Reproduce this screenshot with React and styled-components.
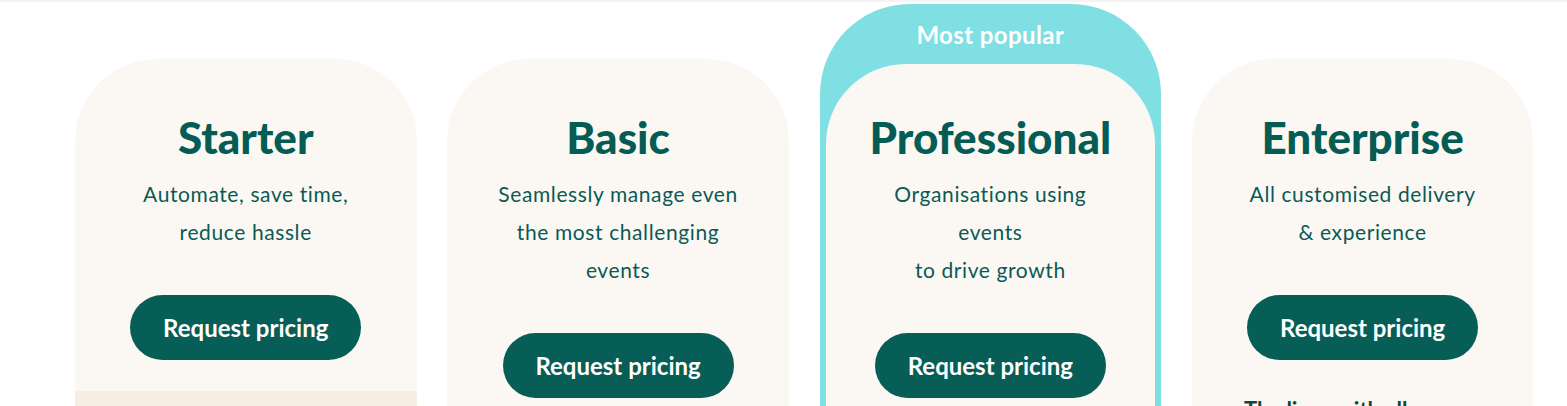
import React from "react";
import styled, { createGlobalStyle } from "styled-components";

const GlobalStyle = createGlobalStyle`
    html, body {
        margin: 0;
        padding: 0;
        background: #ffffff;
        font-family: "Lato", "Open Sans", sans-serif;
        overflow: hidden;
    }
`;

const Page = styled.div`
    width: 1567px;
    height: 406px;
    border-top: 2px solid #f4f4f4;
    box-sizing: border-box;
    overflow: hidden;
`;

const Row = styled.div`
    display: grid;
    grid-template-columns: repeat(4, 341.5px);
    column-gap: 30.8px;
    padding: 2px 0 0 75px;
    align-items: start;
`;

const Card = styled.div`
    margin-top: 55px;
    background: #fbf8f4;
    border-radius: 82px 82px 0 0;
    overflow: hidden;
`;

const Popular = styled.div`
    background: #80dfe3;
    border-radius: 90px 90px 0 0;
    padding: 0 6px;
`;

const PopularLabel = styled.div`
    height: 60px;
    display: flex;
    align-items: center;
    justify-content: center;
    color: #ffffff;
    font-weight: 700;
    font-size: 24px;
    letter-spacing: 0.4px;
    padding-top: 1px;
    box-sizing: border-box;
`;

const PopularCard = styled(Card)`
    margin-top: 0;
    border-radius: 80px 80px 0 0;
`;

const Top = styled.div`
    display: flex;
    flex-direction: column;
    align-items: center;
    text-align: center;
    padding: ${({ $inner }) => ($inner ? "50px" : "55px")} 20px 31px;
`;

const Title = styled.h2`
    margin: 0;
    color: #055c55;
    font-weight: 900;
    font-size: 44px;
    line-height: 46px;
`;

const Desc = styled.p`
    margin: 15px 0 0;
    color: #0b5a55;
    font-size: 21px;
    letter-spacing: 0.6px;
    line-height: 38px;
`;

const Button = styled.button`
    margin-top: 44px;
    width: 231px;
    height: 65px;
    border: none;
    border-radius: 33px;
    background: #065e56;
    color: #ffffff;
    font-family: inherit;
    font-weight: 700;
    font-size: 24px;
    cursor: pointer;
`;

const Features = styled.div`
    background: ${({ $tint }) => ($tint ? "#f6eee3" : "transparent")};
    min-height: 60px;
    padding: 5px 52px 0;
    color: #0b4743;
    font-weight: 700;
    font-size: 22px;
    line-height: 28px;
`;

const plans = [
    { name: "Starter", lines: ["Automate, save time,", "reduce hassle"], tint: true },
    { name: "Basic", lines: ["Seamlessly manage even", "the most challenging", "events"] },
    { name: "Professional", lines: ["Organisations using", "events", "to drive growth"], popular: true },
    { name: "Enterprise", lines: ["All customised delivery", "& experience"], feature: "The lines with all" },
];

const PlanBody = ({ plan, inner }) => (
    <>
        <Top $inner={inner}>
            <Title>{plan.name}</Title>
            <Desc>
                {plan.lines.map((l, i) => (
                    <React.Fragment key={i}>
                        {i > 0 && <br />}
                        {l}
                    </React.Fragment>
                ))}
            </Desc>
            <Button>Request pricing</Button>
        </Top>
        <Features $tint={plan.tint}>{plan.feature}</Features>
    </>
);

const App = () => {
    return (
        <Page>
            <GlobalStyle />
            <Row>
                {plans.map((plan) =>
                    plan.popular ? (
                        <Popular key={plan.name}>
                            <PopularLabel>Most popular</PopularLabel>
                            <PopularCard>
                                <PlanBody plan={plan} inner />
                            </PopularCard>
                        </Popular>
                    ) : (
                        <Card key={plan.name}>
                            <PlanBody plan={plan} />
                        </Card>
                    )
                )}
            </Row>
        </Page>
    );
};

export default App;
